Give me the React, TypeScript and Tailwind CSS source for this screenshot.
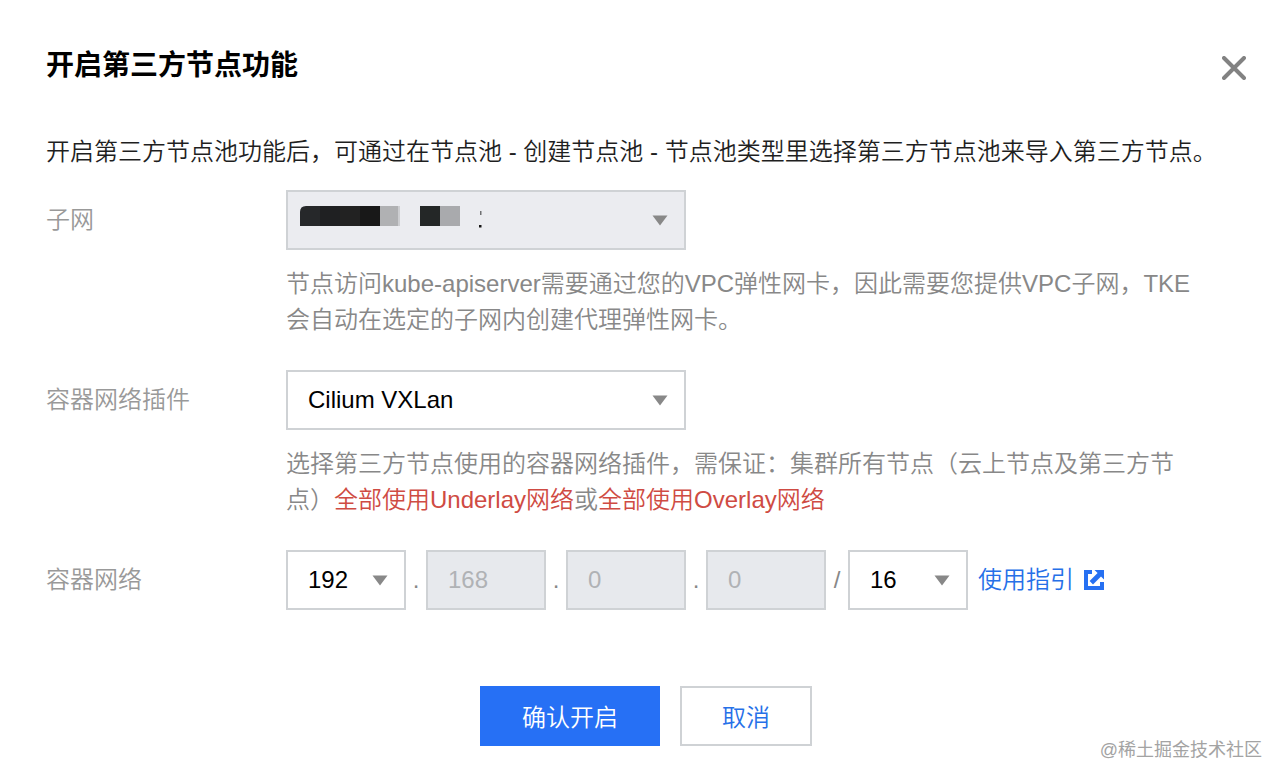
import type { ReactNode, SelectHTMLAttributes } from "react";

const boxStyle =
  "h-[60px] w-full appearance-none rounded-none border-2 border-[#cfd2d5] pl-5 text-2xl outline-none";

function Caret() {
  return (
    <svg
      className="pointer-events-none absolute top-6 right-[18px] h-3 w-4"
      viewBox="0 0 16 12"
      aria-hidden="true"
    >
      <path d="M0.5 1.5h15L8 11.5z" fill="#888888" />
    </svg>
  );
}

interface SelectProps extends SelectHTMLAttributes<HTMLSelectElement> {
  options: string[];
  width: string;
  tone?: string;
  children?: ReactNode;
}

function Select({ options, width, tone = "bg-white text-black", children, ...rest }: SelectProps) {
  return (
    <div className={`relative shrink-0 ${width}`}>
      <select className={`${boxStyle} ${tone}`} {...rest}>
        {options.map((option) => (
          <option key={option}>{option}</option>
        ))}
      </select>
      {children}
      <Caret />
    </div>
  );
}

function Octet({ value, label }: { value: string; label: string }) {
  return (
    <div className="w-[120px] shrink-0">
      <input
        className={`${boxStyle} bg-[#e7e9ed] text-[#b0b2b5]`}
        value={value}
        aria-label={label}
        disabled
        readOnly
      />
    </div>
  );
}

function Separator({ children, width = "w-5" }: { children: string; width?: string }) {
  return <span className={`shrink-0 text-center text-[#888888] ${width}`}>{children}</span>;
}

function Field({ id, label, children }: { id: string; label: string; children: ReactNode }) {
  return (
    <div className="flex items-start">
      <label htmlFor={id} className="w-60 shrink-0 py-3 text-[#999999]">
        {label}
      </label>
      <div className="min-w-0 flex-1">{children}</div>
    </div>
  );
}

function Hint({ children }: { children: ReactNode }) {
  return <p className="mt-4 max-w-[908px] text-[#888888]">{children}</p>;
}

export default function App() {
  return (
    <main
      role="dialog"
      aria-labelledby="dialog-title"
      className="relative min-h-screen bg-white pt-[46px] pr-[38px] pb-9 pl-[46px] font-['Liberation_Sans','Noto_Sans_CJK_SC',sans-serif] text-2xl leading-9 font-[350]"
    >
      <header className="flex items-start justify-between">
        <h1 id="dialog-title" className="text-[28px] leading-10 font-bold text-black">
          开启第三方节点功能
        </h1>
        <button type="button" aria-label="关闭" className="mt-[10px]">
          <svg className="size-6" viewBox="0 0 24 24" aria-hidden="true">
            <path
              d="M2 2l20 20M22 2L2 22"
              stroke="#828282"
              strokeWidth="4"
              strokeLinecap="round"
              fill="none"
            />
          </svg>
        </button>
      </header>

      <p className="mt-12 text-[#1f1f1f]">
        开启第三方节点池功能后，可通过在节点池 - 创建节点池 - 节点池类型里选择第三方节点池来导入第三方节点。
      </p>

      <form className="mt-5" onSubmit={(event) => event.preventDefault()}>
        <div className="flex flex-col gap-8">
          <Field id="subnet" label="子网">
            <Select id="subnet" options={[""]} width="w-[400px]" tone="bg-[#ebecf0] opacity-100" disabled>
              <svg
                className="pointer-events-none absolute top-4 left-3 h-6 w-48"
                viewBox="0 0 192 24"
                aria-hidden="true"
              >
                <path d="M2 20V6q0-6 6-6H22V20z" fill="#26282a" />
                <path d="M22 0H42V20H22z" fill="#1f2022" />
                <path d="M42 0H62V20H42z" fill="#222222" />
                <path d="M62 0H82V20H62z" fill="#181818" />
                <path d="M82 0H100V20H82z" fill="#b0b1b3" />
                <path d="M100 0H102V20H100z" fill="#cdced1" />
                <path d="M122 0H142V20H122z" fill="#242727" />
                <path d="M142 0H162V20H142z" fill="#a9aaad" />
                <path d="M182 5h1.5v4H182z" fill="#707173" />
                <path d="M181 19h2.5v2.5H181z" fill="#151515" />
              </svg>
            </Select>
            <Hint>
              节点访问kube-apiserver需要通过您的VPC弹性网卡，因此需要您提供VPC子网，TKE会自动在选定的子网内创建代理弹性网卡。
            </Hint>
          </Field>

          <Field id="plugin" label="容器网络插件">
            <Select id="plugin" options={["Cilium VXLan"]} width="w-[400px]" />
            <Hint>
              选择第三方节点使用的容器网络插件，需保证：集群所有节点（云上节点及第三方节点）
              <span className="text-[#cf4b43]">全部使用Underlay网络</span>或
              <span className="text-[#cf4b43]">全部使用Overlay网络</span>
            </Hint>
          </Field>

          <Field id="network" label="容器网络">
            <div className="flex items-center">
              <Select id="network" options={["192"]} width="w-[120px]" />
              <Separator>.</Separator>
              <Octet value="168" label="第二段" />
              <Separator>.</Separator>
              <Octet value="0" label="第三段" />
              <Separator>.</Separator>
              <Octet value="0" label="第四段" />
              <Separator width="w-[22px]">/</Separator>
              <Select options={["16"]} width="w-[120px]" aria-label="掩码" />
              <a href="#guide" className="ml-[10px] flex items-center gap-[10px] text-[#2670e8]">
                使用指引
                <svg className="size-5" viewBox="0 0 20 20" aria-hidden="true">
                  <path
                    d="M0 0H8V4H4V16H16V12H20V20H0z M10.5 0H20V9.5L17 6.5L9 14.5L5.6 11.1L13.6 3.1z"
                    fill="#2670f2"
                  />
                </svg>
              </a>
            </div>
          </Field>
        </div>

        <div className="mt-[76px] flex justify-center gap-5">
          <button type="submit" className="h-[60px] w-[180px] bg-[#2670f5] pt-1 text-white">
            确认开启
          </button>
          <button
            type="button"
            className="h-[60px] w-[132px] border-2 border-[#cfd2d5] bg-white pt-1 text-[#2670e8]"
          >
            取消
          </button>
        </div>
      </form>

      <span className="absolute right-[22px] bottom-[18px] text-lg leading-7 font-normal text-[#a3a3a3]">
        @稀土掘金技术社区
      </span>
    </main>
  );
}
